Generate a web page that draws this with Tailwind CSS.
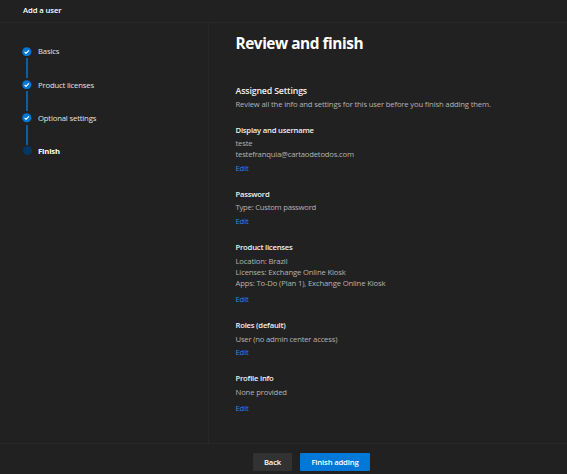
<!DOCTYPE html>
<html lang="en">
<head>
<meta charset="utf-8">
<title>Add a user</title>
<script src="https://cdn.jsdelivr.net/npm/@tailwindcss/browser@4"></script>
</head>
<body class="flex h-[474px] w-[567px] flex-col overflow-hidden bg-[#212121] font-['Open_Sans','Noto_Sans',sans-serif] text-[7.7px] leading-[12px] tracking-[-0.16px] whitespace-nowrap text-[#b3b3b3]">
  <header class="h-[23px] shrink-0 border-b border-[#282828] pt-1 pl-[23px] font-semibold tracking-[-0.1px] text-white">Add a user</header>
  <div class="flex min-h-0 flex-1">
    <nav class="w-[209px] shrink-0 border-r border-[#282828] pt-[22px] pl-[22px] text-[#e4e4e4]">
      <ol>
        <li class="flex h-[33.3px] gap-[6px]">
          <div class="flex w-[10px] flex-col items-center pt-[1.5px]">
            <svg class="h-[9.5px] w-[9.5px] shrink-0" viewBox="0 0 19 19"><circle cx="9.5" cy="9.5" r="9.2" fill="#0078d4"/><path d="M5.2 9.8l2.8 2.8 5.8-5.8" fill="none" stroke="#fff" stroke-width="2.4"/></svg>
            <span class="mt-[2px] h-[20px] w-[1.5px] bg-[#0f5f9f]"></span>
          </div>
          <span>Basics</span>
        </li>
        <li class="flex h-[33.3px] gap-[6px]">
          <div class="flex w-[10px] flex-col items-center pt-[1.5px]">
            <svg class="h-[9.5px] w-[9.5px] shrink-0" viewBox="0 0 19 19"><circle cx="9.5" cy="9.5" r="9.2" fill="#0078d4"/><path d="M5.2 9.8l2.8 2.8 5.8-5.8" fill="none" stroke="#fff" stroke-width="2.4"/></svg>
            <span class="mt-[2px] h-[20px] w-[1.5px] bg-[#0f5f9f]"></span>
          </div>
          <span class="pt-[0.5px]">Product licenses</span>
        </li>
        <li class="flex h-[33.3px] gap-[6px]">
          <div class="flex w-[10px] flex-col items-center pt-[1.5px]">
            <svg class="h-[9.5px] w-[9.5px] shrink-0" viewBox="0 0 19 19"><circle cx="9.5" cy="9.5" r="9.2" fill="#0078d4"/><path d="M5.2 9.8l2.8 2.8 5.8-5.8" fill="none" stroke="#fff" stroke-width="2.4"/></svg>
            <span class="mt-[2px] h-[20px] w-[1.5px] bg-[#0f5f9f]"></span>
          </div>
          <span>Optional settings</span>
        </li>
        <li class="flex gap-[6px]">
          <div class="flex w-[10px] flex-col items-center pt-[1.5px]">
            <span class="h-[9px] w-[9px] rounded-full bg-[#043862]"></span>
          </div>
          <span class="font-bold text-white">Finish</span>
        </li>
      </ol>
    </nav>
    <main class="flex-1 pt-[8px] pl-[26.5px]">
      <h1 class="h-[26px] text-[15.4px] leading-[26px] font-bold tracking-[-0.46px] text-white">Review and finish</h1>
      <h2 class="mt-[27px] h-[14px] text-[8.8px] leading-[14px] font-semibold text-[#f0f0f0]">Assigned Settings</h2>
      <p>Review all the info and settings for this user before you finish adding them.</p>
      <section class="mt-[14px]">
        <h3 class="mb-px font-semibold tracking-[-0.22px] text-[#f0f0f0]">Display and username</h3>
        <p>teste</p>
        <p class="-mt-px tracking-[-0.2px]">testefranquia@cartaodetodos.com</p>
        <a class="mt-[2px] block text-[#2488ea]">Edit</a>
      </section>
      <section class="mt-[14px]">
        <h3 class="mb-px font-semibold tracking-[-0.22px] text-[#f0f0f0]">Password</h3>
        <p class="tracking-[-0.24px]">Type: Custom password</p>
        <a class="mt-[2px] block text-[#2488ea]">Edit</a>
      </section>
      <section class="mt-[14px]">
        <h3 class="mb-[3px] font-semibold tracking-[-0.22px] text-[#f0f0f0]">Product licenses</h3>
        <p class="leading-[11px]">Location: Brazil<br>Licenses: Exchange Online Kiosk<br>Apps: To-Do (Plan 1), Exchange Online Kiosk</p>
        <a class="mt-[4px] block text-[#2488ea]">Edit</a>
      </section>
      <section class="mt-[14px]">
        <h3 class="mb-[2px] font-semibold tracking-[-0.22px] text-[#f0f0f0]">Roles (default)</h3>
        <p class="tracking-[-0.2px]">User (no admin center access)</p>
        <a class="mt-[1px] block text-[#2488ea]">Edit</a>
      </section>
      <section class="mt-[14px]">
        <h3 class="mb-[2px] font-semibold tracking-[-0.22px] text-[#f0f0f0]">Profile info</h3>
        <p>None provided</p>
        <a class="mt-[3.5px] block text-[#2488ea]">Edit</a>
      </section>
    </main>
  </div>
  <footer class="flex h-[31px] shrink-0 gap-[8px] border-t border-[#282828] pt-[9px] pl-[253px] font-semibold text-white">
    <button class="h-[18px] w-[39px] rounded-[1px] bg-[#323232] tracking-[-0.16px]">Back</button>
    <button class="h-[18px] w-[70px] rounded-[1px] bg-[#0078d7] tracking-[-0.16px]">Finish adding</button>
  </footer>
</body>
</html>
